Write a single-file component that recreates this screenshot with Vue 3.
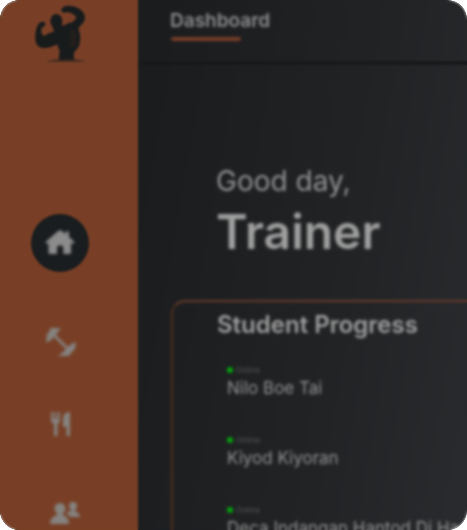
<script setup>
const students = [
  { name: 'Nilo Boe Tai', status: 'Online' },
  { name: 'Kiyod Kiyoran', status: 'Online' },
  { name: 'Deca Indangan Hantod Di Hawod', status: 'Online' },
]
</script>

<template>
  <div class="shell">
    <aside class="sidebar">
      <a href="#" class="logo" aria-label="Home page">
        <svg viewBox="100 9 162 180" aria-hidden="true">
          <path d="M184 30C187 20 200 15 213 18C232 20 244 28 251 38C258 47 257 61 250 69C243 76 238 81 236 88C244 103 243 124 238 137C233 149 224 153 222 163L224 179H177L180 150C174 145 175 138 174 134C163 136 150 144 132 144C116 143 107 133 107 117C106 99 109 82 117 71C123 62 136 64 138 71C137 78 130 80 126 84C123 92 126 102 131 108C145 102 155 95 170 94C176 90 181 89 187 85C193 73 204 70 216 67C224 63 230 56 229 50C222 42 211 37 202 36C196 40 187 39 184 30Z" />
          <ellipse cx="170" cy="63" rx="18" ry="21" />
          <path d="M158 80L188 73L198 98L166 102Z" />
          <path class="crease" d="M211 92C218 105 220 119 213 139M218 88C228 105 228 119 221 139" />
          <path class="ground" d="M136 184Q165 177 200 178Q235 177 260 184Q200 187 136 184Z" />
        </svg>
      </a>
      <nav class="nav" aria-label="Main">
        <a href="#" class="item home" aria-label="Home">
          <svg viewBox="0 0 30 26" width="30" height="26" aria-hidden="true">
            <path d="M13.800 0.500Q15 0 16.200 .5L20.500 4V1.500H24V7L29 11.400Q30 13.400 28 13.600H26V22.500Q26 24 24.500 24H18.300V17.500Q18.300 15.500 16.300 15.500H14Q12 15.500 12 17.500V24H5Q3.500 24 3.500 22.500V13.600H2Q0 13.400 1 11.400Z" />
          </svg>
        </a>
        <a href="#" class="item" aria-label="Workouts">
          <svg viewBox="0 0 32 32" width="32" height="32" aria-hidden="true">
            <path d="M6 2H17L14 6L12 9L24 21L27 18L32 16L31 23L28 26L25 30H14L19 26L22 23L10 11L7 14L2 17L3 8L6 5Z" />
          </svg>
        </a>
        <a href="#" class="item" aria-label="Meals">
          <svg viewBox="0 0 24 24" width="24" height="24" aria-hidden="true">
            <path d="M3 0H5V7H6.500V0H8.500V7H10V0H12V8Q12 11 9.500 12V24H6V12Q3 11 3 8ZM22 0V24H18.500V15H15V7Q15 0 22 0Z" />
          </svg>
        </a>
        <a href="#" class="item people" aria-label="Students">
          <svg viewBox="0 0 30 24" width="30" height="24" aria-hidden="true">
            <circle cx="10" cy="6.500" r="5.500" />
            <path d="M7 10H13V13Q19 15 19 22H0Q0 15 7 13Z" />
            <circle cx="23" cy="4" r="4" />
            <path d="M21 6H25V9Q30 11 30 15H20Q18 12 16 11Q18 9 21 9Z" />
          </svg>
        </a>
      </nav>
    </aside>
    <main class="main">
      <header class="topbar">
        <a href="#" class="tab">Dashboard</a>
      </header>
      <section class="content">
        <h1 class="greeting"><span>Good day,</span><strong>Trainer</strong></h1>
        <section class="panel">
          <h2>Student Progress</h2>
          <ul>
            <li v-for="s in students" :key="s.name">
              <span class="status">{{ s.status }}</span>
              <span class="name">{{ s.name }}</span>
            </li>
          </ul>
        </section>
      </section>
    </main>
    <div class="veil"></div>
  </div>
</template>

<style>
body {
  margin: 0;
  background: #fff;
}
</style>

<style scoped>
.shell {
  position: relative;
  display: flex;
  height: 100vh;
  overflow: hidden;
  border-radius: 20px;
  font-family: Inter, "Liberation Sans", sans-serif;
  color: #949494;
  background: linear-gradient(100deg, #1a1c1e 28%, #222325 70%, #292b2e);
}
.veil {
  position: absolute;
  inset: 0;
  border-radius: 20px;
  backdrop-filter: blur(1px);
  pointer-events: none;
}
.tab,
.content,
.item svg {
  filter: blur(1px);
}
a {
  color: inherit;
  text-decoration: none;
}
.sidebar {
  flex: 0 0 120px;
  display: flex;
  flex-direction: column;
  align-items: center;
  padding: 3px 18px 0 0;
  background: #783f26;
}
.logo svg {
  display: block;
  width: 54px;
  height: 60px;
  fill: #181b1c;
}
.logo .crease {
  fill: none;
  stroke: #4a2c20;
  stroke-width: 2;
}
.logo .ground {
  opacity: 0.6;
}
.nav {
  display: flex;
  flex-direction: column;
  align-items: center;
  gap: 54px;
  margin-top: 151px;
}
.item {
  display: flex;
  align-items: center;
  justify-content: center;
  color: #85827f;
}
.item svg {
  fill: currentColor;
}
.home {
  width: 58px;
  height: 58px;
  border-radius: 50%;
  background: #1a1d1f;
  color: #8c8c8c;
}
.people {
  height: 48px;
  padding-left: 10px;
}
.main {
  flex: 1;
  min-width: 0;
}
.topbar {
  display: flex;
  height: 65px;
  padding: 8px 32px 0;
  box-sizing: border-box;
  border-bottom: 4px solid #17191b;
}
.tab {
  font-size: 19px;
  font-weight: 600;
  line-height: 26px;
  color: #8e8e8e;
}
.tab::after {
  content: "";
  display: block;
  width: 70px;
  height: 4px;
  margin: 3px 0 0 1px;
  border-radius: 2px;
  background: #793f28;
}
.content {
  padding: 97px 0 0 33px;
}
.greeting {
  display: flex;
  flex-direction: column;
  margin: 0 0 37px 45px;
  font-weight: 400;
}
.greeting span {
  font-size: 28px;
  line-height: 38px;
}
.greeting strong {
  font-size: 48px;
  font-weight: 600;
  line-height: 63px;
  color: #a0a0a0;
}
.panel {
  min-height: 300px;
  margin-right: -8px;
  padding: 7px 0 0 44px;
  border: 2px solid #6b3d2c;
  border-left-color: #51301f;
  border-right: 0;
  border-radius: 14px 0 0 0;
}
h2 {
  margin: 0;
  font-size: 24px;
  font-weight: 600;
  line-height: 32px;
  color: #a0a0a0;
}
ul {
  margin: 24px 0 0;
  padding: 0 0 0 10px;
  list-style: none;
}
li {
  display: flex;
  flex-direction: column;
  height: 70px;
  white-space: nowrap;
}
.status {
  display: flex;
  align-items: center;
  gap: 3px;
  font-size: 8px;
  line-height: 10px;
  color: #555657;
}
.status::before {
  content: "";
  width: 6px;
  height: 6px;
  border-radius: 50%;
  background: #06a60b;
}
.name {
  font-size: 17px;
  line-height: 26px;
}
</style>
